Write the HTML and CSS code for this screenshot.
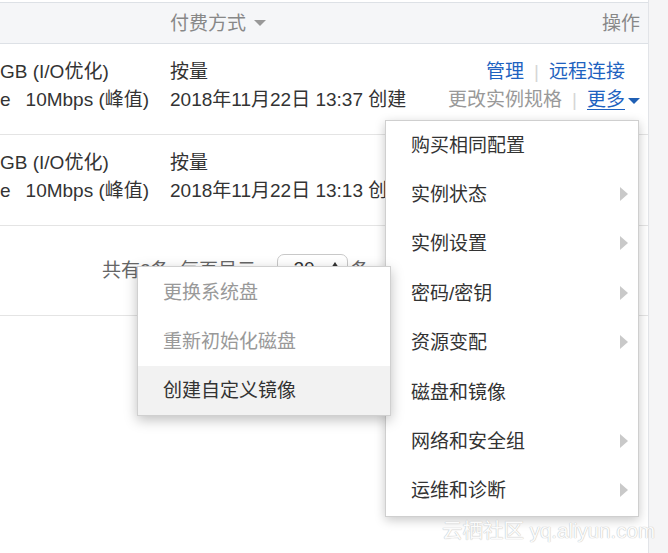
FILE: index.html
```html
<!DOCTYPE html>
<html lang="zh-CN">
<head>
<meta charset="utf-8">
<link rel="stylesheet" href="styles.css">
</head>
<body>
<div class="page">
  <div class="panel">
    <div class="thead grid">
      <div></div>
      <div class="th">付费方式<span class="caret caret-gray"></span></div>
      <div class="th right">操作</div>
    </div>
    <div class="trow grid">
      <div class="cell"><div>GB (I/O优化)</div><div>e<span class="gap"></span>10Mbps (峰值)</div></div>
      <div class="cell"><div>按量</div><div>2018年11月22日 13:37 创建</div></div>
      <div class="cell right">
        <div class="ops1"><span class="link">管理</span><span class="sep">|</span><span class="link">远程连接</span></div>
        <div class="ops2"><span class="muted">更改实例规格</span><span class="sep">|</span><span class="link more">更多</span><span class="caret caret-blue"></span></div>
      </div>
    </div>
    <div class="trow grid">
      <div class="cell"><div>GB (I/O优化)</div><div>e<span class="gap"></span>10Mbps (峰值)</div></div>
      <div class="cell nowrap"><div>按量</div><div>2018年11月22日 13:13 创建</div></div>
      <div class="cell right"></div>
    </div>
    <div class="pager">
      <span>共有2条, 每页显示:</span>
      <span class="select"><span>20</span><span class="updown"></span></span>
      <span>条</span>
    </div>
  </div>
  <div class="strip"></div>

  <div class="menu">
    <div class="item">购买相同配置</div>
    <div class="item">实例状态<span class="arrow"></span></div>
    <div class="item">实例设置<span class="arrow"></span></div>
    <div class="item">密码/密钥<span class="arrow"></span></div>
    <div class="item">资源变配<span class="arrow"></span></div>
    <div class="item">磁盘和镜像</div>
    <div class="item">网络和安全组<span class="arrow"></span></div>
    <div class="item">运维和诊断<span class="arrow"></span></div>
  </div>

  <div class="submenu">
    <div class="sitem disabled">更换系统盘</div>
    <div class="sitem disabled">重新初始化磁盘</div>
    <div class="sitem hover">创建自定义镜像</div>
  </div>

  <div class="watermark">云栖社区 yq.aliyun.com</div>
</div>
</body>
</html>
```

FILE: styles.css
```css
html, body {
  margin: 0;
  padding: 0;
}
body {
  font-family: "Liberation Sans", "Noto Sans CJK SC", sans-serif;
  font-size: 19px;
  color: #333;
  background: #fff;
}
.page {
  position: relative;
  width: 668px;
  height: 553px;
  overflow: hidden;
  display: flex;
}
.panel {
  width: 648px;
  border-right: 1px solid #e2e4e8;
  padding-top: 2px;
  background: #fff;
}
.strip {
  flex: 1;
  background: #f5f5f6;
}
.grid {
  display: grid;
  grid-template-columns: 170px 1fr auto;
  padding-right: 8px;
}
.thead {
  height: 42px;
  box-sizing: border-box;
  padding-bottom: 3px;
  align-items: center;
  background: #f5f6f8;
  border-top: 1px solid #dde1e6;
  border-bottom: 1px solid #dde1e6;
  color: #888;
}
.th {
  display: flex;
  align-items: center;
}
.right {
  justify-content: flex-end;
  text-align: right;
}
.caret {
  display: inline-block;
  width: 0;
  height: 0;
  border-left: 6px solid transparent;
  border-right: 6px solid transparent;
  border-top: 6px solid #999;
}
.caret-gray {
  margin-left: 8px;
  margin-top: 2px;
}
.caret-blue {
  border-top-color: #1f5fb4;
  margin-left: 3px;
  vertical-align: middle;
}
.trow {
  height: 91px;
  box-sizing: border-box;
  padding-top: 14px;
  border-bottom: 1px solid #e4e4e4;
  line-height: 28px;
  white-space: nowrap;
}
.gap {
  display: inline-block;
  width: 15px;
}
.ops1 {
  margin-right: 15px;
}
.link {
  color: #1e62c0;
}
.more {
  text-decoration: underline;
  text-underline-offset: 3px;
}
.muted {
  color: #999;
}
.sep {
  color: #d6d6d6;
  margin: 0 10px;
}
.pager {
  height: 90px;
  box-sizing: border-box;
  border-bottom: 1px solid #e4e4e4;
  display: flex;
  align-items: center;
  padding-left: 102px;
  padding-bottom: 4px;
  color: #666;
  white-space: nowrap;
}
.select {
  display: inline-flex;
  align-items: center;
  justify-content: space-between;
  box-sizing: border-box;
  width: 71px;
  height: 30px;
  margin: 0 2px 0 16px;
  padding: 0 8px 0 15px;
  border: 1px solid #c8c8c8;
  border-radius: 7px;
  color: #333;
}
.updown {
  width: 0;
  height: 0;
  border-left: 4px solid transparent;
  border-right: 4px solid transparent;
  border-bottom: 6px solid #333;
  margin-bottom: 8px;
}
.menu {
  position: absolute;
  left: 385px;
  top: 120px;
  width: 254px;
  box-sizing: border-box;
  background: #fff;
  border: 1px solid #cfcfcf;
  box-shadow: 0 3px 10px rgba(0, 0, 0, 0.22);
  z-index: 2;
}
.item {
  height: 49.4px;
  box-sizing: border-box;
  display: flex;
  align-items: center;
  justify-content: space-between;
  padding: 0 10px 5px 25px;
  color: #333;
}
.arrow {
  width: 0;
  height: 0;
  margin-top: 3px;
  border-top: 7px solid transparent;
  border-bottom: 7px solid transparent;
  border-left: 8px solid #c9c9c9;
}
.submenu {
  position: absolute;
  left: 137px;
  top: 266px;
  width: 254px;
  box-sizing: border-box;
  background: #fff;
  border: 1px solid #d0d0d0;
  box-shadow: 0 4px 12px rgba(0, 0, 0, 0.25);
  z-index: 3;
}
.sitem {
  height: 49.3px;
  box-sizing: border-box;
  display: flex;
  align-items: center;
  padding: 0 0 3px 25px;
  color: #333;
}
.sitem.disabled {
  color: #999;
}
.sitem.hover {
  background: #f2f2f2;
}
.watermark {
  position: absolute;
  right: 13px;
  bottom: 9px;
  font-size: 20.5px;
  color: #fbfbfb;
  text-shadow: 0 0 1px #bdbdbd, 0 0 1px #cccccc;
  z-index: 4;
}
```
